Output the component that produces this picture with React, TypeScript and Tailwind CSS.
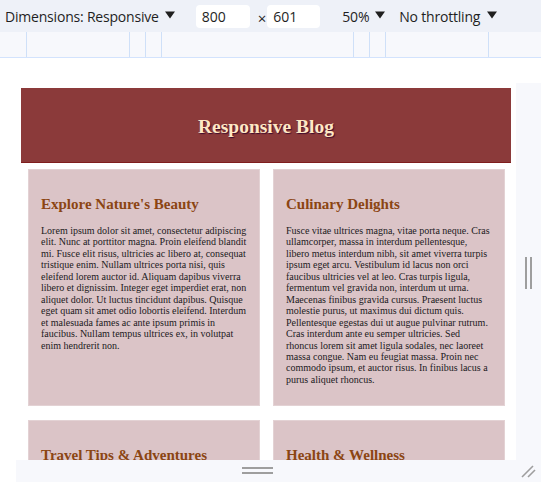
import React from "react";

const posts = [
  {
    title: "Explore Nature's Beauty",
    body: "Lorem ipsum dolor sit amet, consectetur adipiscing elit. Nunc at porttitor magna. Proin eleifend blandit mi. Fusce elit risus, ultricies ac libero at, consequat tristique enim. Nullam ultrices porta nisi, quis eleifend lorem auctor id. Aliquam dapibus viverra libero et dignissim. Integer eget imperdiet erat, non aliquet dolor. Ut luctus tincidunt dapibus. Quisque eget quam sit amet odio lobortis eleifend. Interdum et malesuada fames ac ante ipsum primis in faucibus. Nullam tempus ultrices ex, in volutpat enim hendrerit non.",
  },
  {
    title: "Culinary Delights",
    body: "Fusce vitae ultrices magna, vitae porta neque. Cras ullamcorper, massa in interdum pellentesque, libero metus interdum nibh, sit amet viverra turpis ipsum eget arcu. Vestibulum id lacus non orci faucibus ultricies vel at leo. Cras turpis ligula, fermentum vel gravida non, interdum ut urna. Maecenas finibus gravida cursus. Praesent luctus molestie purus, ut maximus dui dictum quis. Pellentesque egestas dui ut augue pulvinar rutrum. Cras interdum ante eu semper ultricies. Sed rhoncus lorem sit amet ligula sodales, nec laoreet massa congue. Nam eu feugiat massa. Proin nec commodo ipsum, et auctor risus. In finibus lacus a purus aliquet rhoncus.",
  },
  {
    title: "Travel Tips & Adventures",
    body: "Donec sit amet lacus in nisl varius tincidunt. Aenean vel sem at lorem pretium posuere. Integer vitae mauris non nunc aliquet facilisis.",
  },
  {
    title: "Health & Wellness",
    body: "Curabitur at lacus ac velit ornare lobortis. Suspendisse potenti. Nam pretium turpis et arcu dapibus, vitae ultricies dolor efficitur.",
  },
];

const ui = { fontFamily: '"Open Sans", "Noto Sans", sans-serif' } as const;
const serif = { fontFamily: '"Liberation Serif", "Times New Roman", serif' } as const;

const rulerLines = [26, 129, 145, 161, 353, 369, 385, 488];

function Caret({ ml }: { ml: string }) {
  return (
    <svg className={ml} width="10" height="8" viewBox="0 0 10 8">
      <path d="M0 0.5 L10 0.5 L5 7.5 Z" fill="#1f1f1f" />
    </svg>
  );
}

export default function App() {
  return (
    <div className="w-[541px] h-[482px] overflow-hidden flex flex-col bg-white" style={ui}>
      {/* device toolbar */}
      <div className="h-8 bg-[#eef1f8] flex items-center text-[14px] text-[#1f1f1f] shrink-0">
        <span className="ml-[5px] tracking-[-0.2px]">Dimensions: Responsive</span>
        <Caret ml="ml-[6px] -mt-[2px]" />
        <div className="ml-[21px] w-[54px] h-[23px] bg-white rounded-[4px] flex items-center pl-[6px]">800</div>
        <span className="ml-[8px] mr-[1px] mt-[5px] text-[15px] leading-none">×</span>
        <div className="w-[53px] h-[23px] bg-white rounded-[4px] flex items-center pl-[6px]">601</div>
        <span className="ml-[22px] tracking-[-0.2px]">50%</span>
        <Caret ml="ml-[6px] -mt-[2px]" />
        <span className="ml-[14px] tracking-[-0.2px]">No throttling</span>
        <Caret ml="ml-[7px] -mt-[2px]" />
      </div>

      {/* ruler */}
      <div className="h-[26px] bg-[#f7f8fc] border-b border-[#d3e3fd] relative shrink-0">
        {rulerLines.map((x) => (
          <div
            key={x}
            className="absolute top-0 bottom-0 w-px bg-[#cfe0f8]"
            style={{ left: x }}
          />
        ))}
      </div>

      {/* viewport area */}
      <div className="flex flex-1 min-h-0">
        <div className="w-[516px] overflow-hidden pt-[30px]" style={serif}>
          <header className="ml-[21px] w-[490px] h-[75px] bg-[#8b3a3a] border-b border-[#7f1d1d] flex items-center justify-center pt-[3px]">
            <h1 className="text-[19.5px] font-bold text-[#ffe8c4] [text-shadow:1px_1px_1px_#3d0b2e]">
              Responsive Blog
            </h1>
          </header>
          <main className="ml-[28px] mt-[6px] w-[477px] grid grid-cols-2 gap-x-[13px] gap-y-[14px]">
            {posts.map((p) => (
              <article
                key={p.title}
                className="bg-[#dbc4c7] border border-[#e3d2d4] px-3 pt-[26px] pb-[20px]"
              >
                <h2 className="text-[15px] leading-[17px] font-bold text-[#8b4513] mb-[12px]">{p.title}</h2>
                <p className="text-[10px] leading-[11.46px] text-[#1c1a22]">{p.body}</p>
              </article>
            ))}
          </main>
        </div>
        <div className="flex-1 flex flex-col">
          <div className="h-[25px] bg-white" />
          <div className="flex-1 bg-[#f7f8fc] flex items-center justify-center gap-[3px] pt-[3px]">
            <div className="w-[2px] h-[32px] bg-[#9e9e9e]" />
            <div className="w-[2px] h-[32px] bg-[#9e9e9e]" />
          </div>
        </div>
      </div>

      {/* bottom resize bar */}
      <div className="h-[22px] flex shrink-0">
        <div className="w-4 bg-white" />
        <div className="flex-1 bg-[#f7f8fc] relative">
          <div className="absolute left-[226px] top-[7px] w-[31px] h-[2px] bg-[#9e9e9e]" />
          <div className="absolute left-[226px] top-[12px] w-[31px] h-[2px] bg-[#9e9e9e]" />
          <svg className="absolute right-[5px] top-[3px]" width="15" height="15" viewBox="0 0 15 15">
            <line x1="1" y1="14" x2="12" y2="3" stroke="#9e9e9e" strokeWidth="1.6" />
            <line x1="7" y1="14" x2="14" y2="7" stroke="#9e9e9e" strokeWidth="1.6" />
          </svg>
        </div>
      </div>
    </div>
  );
}
